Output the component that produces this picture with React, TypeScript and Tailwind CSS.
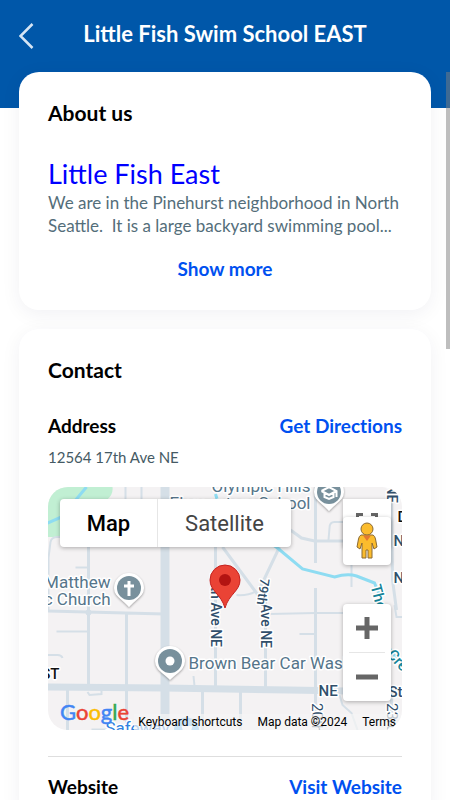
import React from "react";

const card =
  "rounded-[20px] bg-white px-[29px] pt-[27px] pb-[26px] shadow-[0_4px_20px_rgba(20,20,60,0.06)]";

function GoogleMark() {
  return (
    <a href="#google" aria-label="Google" className="font-['Lato',sans-serif] text-[22px] leading-6 font-normal [-webkit-text-stroke:0.5px_currentColor]">
      <span className="text-[#4285f4]">G</span>
      <span className="text-[#ea4335]">o</span>
      <span className="text-[#fbbc04]">o</span>
      <span className="text-[#4285f4]">g</span>
      <span className="text-[#34a853]">l</span>
      <span className="text-[#ea4335]">e</span>
    </a>
  );
}

function MapTiles() {
  return (
    <svg
      className="absolute inset-0 h-full w-full font-['Roboto',sans-serif]"
      viewBox="0 0 355 243"
      preserveAspectRatio="xMidYMid slice"
      aria-hidden="true"
    >
      <rect width="355" height="243" fill="#f4f2f3" />
      <path d="M0 0H65Q66 8 59 13L50 50H0Z" fill="#c1efd3" />
      <g fill="none" stroke="#d5dfe7" strokeWidth="2">
        <path d="M1 124V71L3 55Q4 50 10 50H41" />
        <path d="M78 0V14M94 0V14M28 80.500H41" />
        <path d="M9 144.500H40M0 168H10Q14 168 15 171" />
        <path d="M40 205L42 208L54 207V203M44 242.500H60" />
        <path d="M189 108Q200 109 209 104M146 189L147 199" />
        <path d="M281 53L282 41Q282 35 287 35H296M304 78V100" />
        <path d="M222 127L268 126H300M252 147H268" />
        <path d="M292 208L295 218L304 226L310 243M347 118L349 130H355" />
      </g>
      <g fill="none" stroke="#d5dfe7" strokeWidth="3">
        <path d="M0 124L117 127M41 60V198M79 127V243M20 203V243" />
        <path d="M168 60V200M218 110V200M155 203V243M193 204V243" />
        <path d="M175 60L209 106L218 120M232 60L213 100" />
        <path d="M268 0V76M268 101V243M243 43L254 51L267 54H300" />
        <path d="M344 10L345 93L349 123M344 205V243" />
      </g>
      <circle cx="41" cy="125.500" r="3" fill="#d5dfe7" />
      <path d="M0 200L117 201L242 203L355 205" fill="none" stroke="#d5dfe7" strokeWidth="7" />
      <path d="M117.500 0V243" stroke="#d5dfe7" strokeWidth="9" />
      <g fill="none" stroke="#8edcf2" strokeWidth="3">
        <path d="M0 36L14 30L39 0" />
        <path d="M168 7L172 20L230 61L255 82L287 90Q300 86 309 89L327 96L332 108" />
        <path d="M341 160L355 180" />
      </g>

      <g fill="#55758a" fontSize="17" stroke="#fff" strokeWidth="3" paintOrder="stroke" strokeLinejoin="round">
        <text x="263" y="5" textAnchor="end">Olympic Hills</text>
        <text x="263" y="22" textAnchor="end">Elementary School</text>
        <text x="63" y="101" textAnchor="end">St Matthew</text>
        <text x="63" y="118" textAnchor="end">Catholic Church</text>
        <text x="141" y="182">Brown Bear Car Wash</text>
        <text x="58" y="247" fill="#2f82e0">Safeway</text>
      </g>
      <g fill="#314f6b" fontSize="15" fontWeight="500" stroke="#fff" strokeWidth="3" paintOrder="stroke" strokeLinejoin="round">
        <text transform="translate(163 160) rotate(90)" fontSize="14" textAnchor="end">17th Ave NE</text>
        <text transform="translate(213 161) rotate(90)" fontSize="14" textAnchor="end">Ave NE</text>
        <text transform="translate(213 91) rotate(98)" fontSize="13">79th</text>
        <text transform="translate(264 216) rotate(90)" fontWeight="400">20th Ave</text>
        <text transform="translate(339 216) rotate(90)" fontWeight="400">23rd Ave</text>
        <text transform="translate(339 16) rotate(90)" textAnchor="end">NE</text>
        <text x="271" y="209">NE</text>
        <text x="341" y="210">St</text>
        <text x="346" y="59">NE</text>
        <text x="346" y="96">NE</text>
        <text x="350" y="35" fill="#111">D</text>
        <text x="12" y="192" textAnchor="end" fill="#111">ST</text>
        <text transform="translate(323 99) rotate(75)" fill="#168499">Tho</text>
        <text transform="translate(339 168) rotate(48)" fill="#168499">Cree</text>
      </g>

      <g stroke="#fff" strokeWidth="3" fill="#78909c" className="drop-shadow-[0_1px_1px_rgba(0,0,0,0.35)]">
        <path d="M68 101a13.500 13.500 0 1 1 27 0c0 7-6 9-13.500 17C74 110 68 108 68 101Z" fill="#fff" />
        <path d="M109 174a13.500 13.500 0 1 1 27 0c0 7-6 10-13.500 17C115 184 109 181 109 174Z" fill="#fff" />
        <path d="M268 5a13.500 13.500 0 1 1 27 0c0 7-6 9-13.500 17C274 14 268 12 268 5Z" fill="#fff" />
      </g>
      <g fill="#78909c">
        <circle cx="81.500" cy="101" r="12" />
        <circle cx="122.500" cy="174" r="12" />
        <circle cx="281.500" cy="5" r="12" />
      </g>
      <path d="M81.500 94V109M76.500 99H86.500" stroke="#fff" strokeWidth="3" />
      <circle cx="122.500" cy="174" r="4.500" fill="#fff" />
      <path d="M274 4L281.500 0L289 4V10M274 4L281.500 8L289 4M277 6V10L281.500 12L286 10V6" fill="none" stroke="#fff" strokeWidth="2" />
      <circle cx="139" cy="243" r="12.500" fill="#65b5f5" />
      <path d="M134 239H145L143 246H136Z" fill="#fff" />

      <path d="M162.500 93a15 15 0 1 1 30 0c0 11-11 14-15 28c-4-14-15-17-15-28Z" fill="#ea4335" stroke="#c5221f" />
      <circle cx="177.500" cy="93" r="6" fill="#b31412" />
    </svg>
  );
}

function Pegman() {
  return (
    <svg viewBox="0 0 24 38" className="h-[38px] w-6" aria-hidden="true">
      <g fill="#fbbc2d" stroke="#8a6a35" strokeWidth="1">
        <path d="M6 13H18Q20 14 20.500 17L22 25L19 27L17 21V36H13V28H11V36H7V21L5 27L2 25L3.500 17Q4 14 6 13Z" />
        <circle cx="12" cy="7" r="6" />
      </g>
      <path d="M8 13.500H16L12 19Z" fill="#e37832" />
    </svg>
  );
}

function LocationMap() {
  return (
    <div className="relative h-[243px] overflow-hidden rounded-[20px] font-['Roboto',sans-serif]">
      <MapTiles />
      <div className="absolute top-3 left-3 flex h-12 rounded-sm bg-white text-[22px] shadow-[0_1px_4px_rgba(0,0,0,0.3)]">
        <button type="button" className="w-[98px] border-r border-[#e6e6e6] font-medium text-black">
          Map
        </button>
        <button type="button" className="w-[133px] text-[#444]">
          Satellite
        </button>
      </div>
      <button type="button" aria-label="Toggle fullscreen view" className="absolute top-3 right-[11px] flex h-12 w-12 justify-center bg-white pt-3.5 shadow-[0_1px_4px_rgba(0,0,0,0.3)]">
        <svg viewBox="0 0 22 22" className="h-[22px] w-[22px]" fill="none" stroke="#666" strokeWidth="3" aria-hidden="true">
          <path d="M1.500 7V1.500H7M15 1.500H20.500V7M1.500 15V20.500H7M15 20.500H20.500V15" />
        </svg>
      </button>
      <button type="button" aria-label="Street View" className="absolute top-[30px] right-[11px] flex h-12 w-12 items-center justify-center rounded-sm bg-white shadow-[0_1px_4px_rgba(0,0,0,0.3)]">
        <Pegman />
      </button>
      <div className="absolute top-[117px] right-[11px] flex h-[97px] w-12 flex-col items-center rounded-sm bg-white shadow-[0_1px_4px_rgba(0,0,0,0.3)]">
        <button type="button" aria-label="Zoom in" className="flex h-12 w-full items-center justify-center">
          <svg viewBox="0 0 22 22" className="h-[22px] w-[22px]" stroke="#666" strokeWidth="5" aria-hidden="true">
            <path d="M11 0V22M0 11H22" />
          </svg>
        </button>
        <div className="h-px w-9 bg-[#e6e6e6]" />
        <button type="button" aria-label="Zoom out" className="flex h-12 w-full items-center justify-center">
          <svg viewBox="0 0 22 22" className="h-[22px] w-[22px]" stroke="#666" strokeWidth="5" aria-hidden="true">
            <path d="M0 11H22" />
          </svg>
        </button>
      </div>
      <div className="absolute right-0 bottom-0 flex h-4 items-center gap-[15px] bg-[#f5f5f5]/70 pr-1.5 pl-1 text-[12px] whitespace-nowrap text-black">
        <button type="button">Keyboard shortcuts</button>
        <span>Map data ©2024</span>
        <a href="#terms">Terms</a>
      </div>
      <div className="absolute bottom-1.5 left-3 flex">
        <GoogleMark />
      </div>
    </div>
  );
}

export default function App() {
  return (
    <div className="relative h-screen overflow-hidden bg-white font-['Lato',sans-serif] text-black">
      <header className="relative flex h-[108px] justify-center bg-[#0057a9] pt-5">
        <button type="button" aria-label="Back" className="absolute top-[23px] left-[19px] text-[#d5e5f4]">
          <svg viewBox="0 0 15 26" className="h-[26px] w-[15px]" fill="none" stroke="currentColor" strokeWidth="2.500" aria-hidden="true">
            <path d="M13.500 1L1.500 13L13.500 25" />
          </svg>
        </button>
        <h1 className="text-[22px] leading-7 font-bold text-white">Little Fish Swim School EAST</h1>
      </header>

      <main className="relative -mt-9 flex flex-col gap-[19px] px-[19px]">
        <section className={card}>
          <h2 className="text-[21px] leading-7 font-bold">About us</h2>
          <h3 className="mt-[31px] text-[27px] leading-8 text-[#0000ff]">Little Fish East</h3>
          <p className="mt-px text-[17px] leading-[23px] whitespace-pre-wrap text-[#546e7a]">
            {"We are in the Pinehurst neighborhood in North Seattle.  It is a large backyard swimming pool..."}
          </p>
          <div className="mt-[17px] flex justify-center">
            <button type="button" className="text-[19px] leading-[30px] font-bold text-[#0050f0]">
              Show more
            </button>
          </div>
        </section>

        <section className={card}>
          <h2 className="text-[21px] leading-7 font-bold">Contact</h2>
          <div className="mt-[30px] flex justify-between text-[19px] leading-6 font-bold [font-variant-ligatures:none]">
            <h3>Address</h3>
            <a href="#directions" className="text-[#0050f0]">Get Directions</a>
          </div>
          <p className="mt-[7px] mb-[18px] text-[15px] leading-6 text-[#455a64]">12564 17th Ave NE</p>
          <LocationMap />
          <div className="mt-[26px] flex justify-between border-t border-[#dedede] pt-[18px] text-[19px] leading-6 font-bold">
            <h3>Website</h3>
            <a href="#website" className="text-[#0050f0]">Visit Website</a>
          </div>
        </section>
      </main>

      <div className="absolute top-[72px] right-0 h-[277px] w-1 bg-[#7d7d7d]/50" />
    </div>
  );
}
